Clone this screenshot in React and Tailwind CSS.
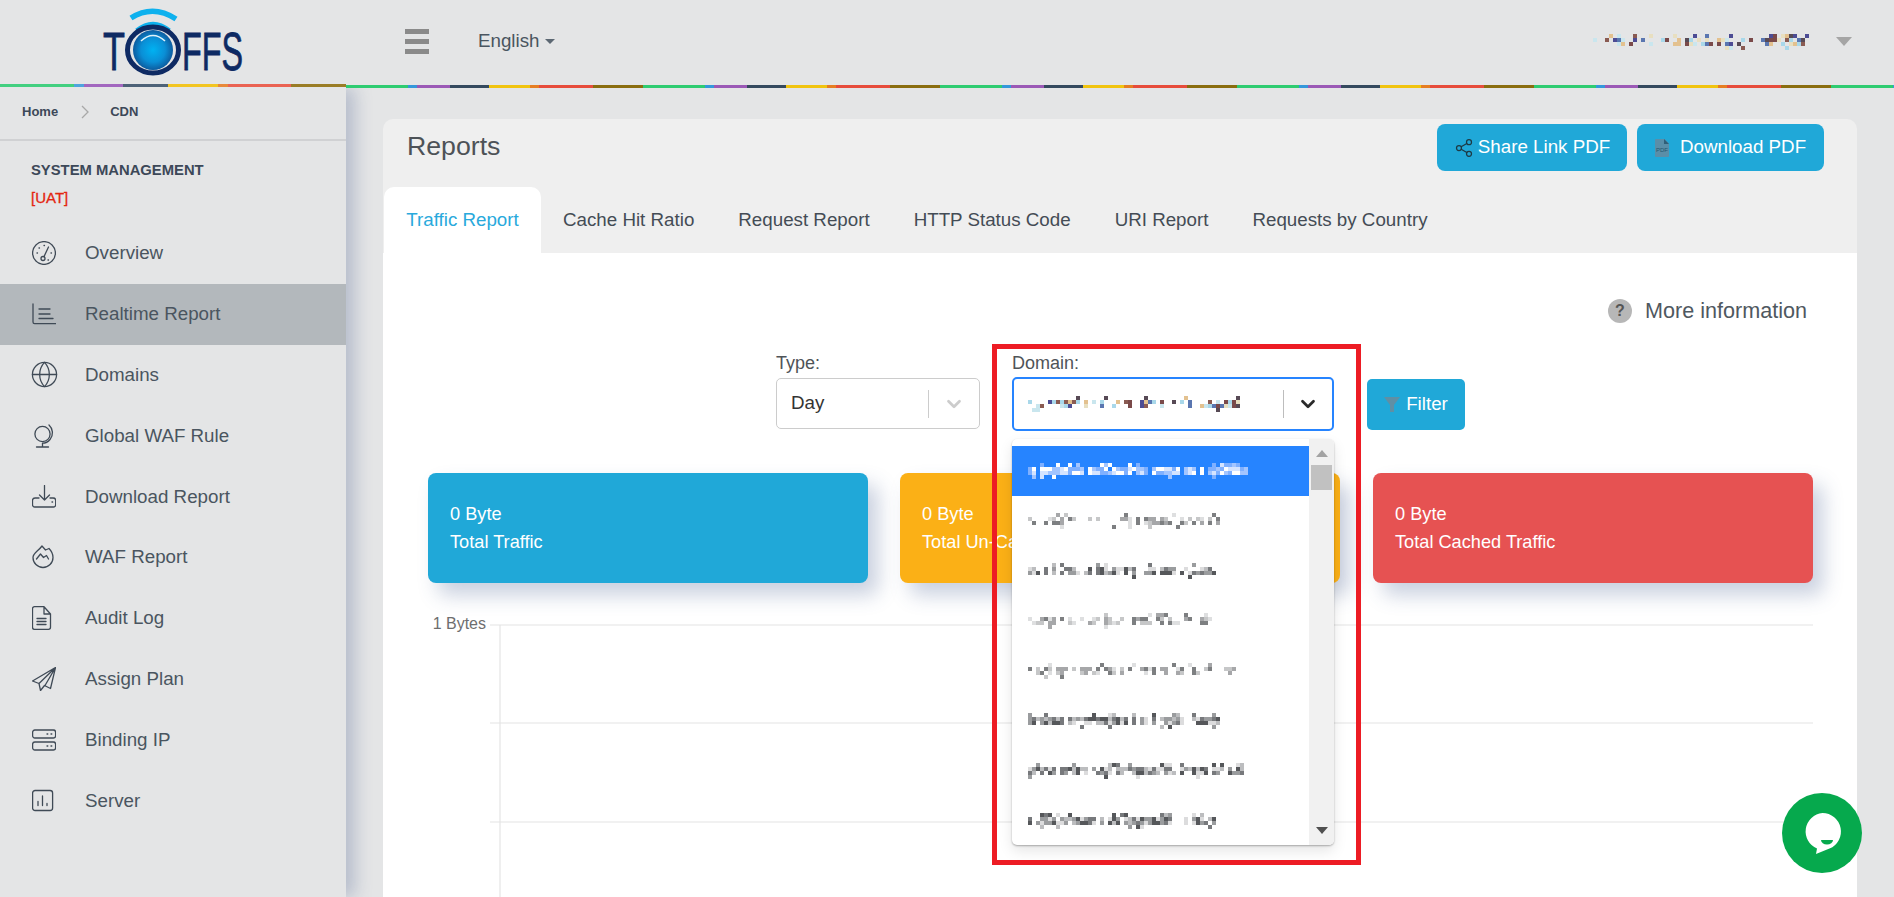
import React from 'react';
import { ChevronDown, Globe, Share2 } from 'lucide-react';

const DOMAIN_ROWS = [
  { seed: 11, width: 220, density: 0.95 },
  { seed: 23, width: 192, density: 0.55 },
  { seed: 37, width: 188, density: 0.85 },
  { seed: 41, width: 184, density: 0.5 },
  { seed: 59, width: 212, density: 0.55 },
  { seed: 67, width: 196, density: 0.9 },
  { seed: 73, width: 216, density: 0.85 },
  { seed: 89, width: 188, density: 0.9 },
];

const GRAYS = ['#55575a', '#77797c', '#9a9c9e', '#bcbdbf', '#dcdcdd'];
const LIGHT_GRAYS = ['#7d7f81', '#a6a7a9', '#c6c7c8', '#dedfe0'];
const BLUES = ['#ffffff', '#d5e4ff', '#a3c5ff', '#7fb0ff'];
const COLORED = ['#8a5b52', '#a9d8ea', '#5a76b0', '#e8dfc0', '#4c4c94', '#e3c18f', '#574a55', '#c9e6ee', '#7a4a4a'];

// the reference hides these names behind a pixel mosaic, same thing here
const Mosaic = ({ seed, width, colors, density = 0.7, cell = 4 }) => {
  const cols = Math.floor(width / cell);
  const rowChance = [density * 0.3, density, density, density * 0.1];
  const rects = [];
  let s = seed * 7919;
  const next = () => {
    s = (s * 1103515245 + 12345) % 2147483648;
    return s / 2147483648;
  };
  for (let c = 0; c < cols; c += 1) {
    const gap = next() < 0.12;
    rowChance.forEach((chance, r) => {
      const roll = next();
      const pick = next();
      if (!gap && roll < chance) {
        rects.push(
          <rect
            key={`${c}-${r}`}
            x={c * cell}
            y={r * cell}
            width={cell}
            height={cell}
            fill={colors[Math.floor(pick * colors.length)]}
          />
        );
      }
    });
  }
  return (
    <svg width={width} height={cell * 4} className="block shrink-0">
      {rects}
    </svg>
  );
};

const Logo = () => (
  <svg width="346" height="84" className="block">
    <defs>
      <radialGradient id="lens" cx="50%" cy="50%" r="55%">
        <stop offset="0%" stopColor="#00b2f2" />
        <stop offset="55%" stopColor="#0a8fd6" />
        <stop offset="100%" stopColor="#0d4f92" />
      </radialGradient>
    </defs>
    <text x="103" y="70" fontSize="53" fill="#0e2a63" stroke="#0e2a63" strokeWidth="0.8" textLength="22" lengthAdjust="spacingAndGlyphs">T</text>
    <text x="182" y="70" fontSize="53" fill="#0e2a63" stroke="#0e2a63" strokeWidth="0.8" textLength="61" lengthAdjust="spacingAndGlyphs">FFS</text>
    <path d="M131 18 Q153 4 176 19" fill="none" stroke="#0eb1ee" strokeWidth="5.5" />
    <path d="M137 31 Q153 18 169 31" fill="none" stroke="#0eb1ee" strokeWidth="5.5" />
    <ellipse cx="153" cy="50" rx="25.5" ry="23" fill="#e4e5e6" stroke="#0e2a63" strokeWidth="5" />
    <circle cx="153" cy="50" r="20" fill="url(#lens)" />
    <path d="M141 41 Q153 30 165 41" fill="none" stroke="#dff3fb" strokeWidth="1.6" />
  </svg>
);

const iconProps = {
  width: 24,
  height: 24,
  viewBox: '0 0 24 24',
  fill: 'none',
  stroke: '#3f4a56',
  strokeWidth: 1.3,
  strokeLinecap: 'round',
  strokeLinejoin: 'round',
};

const GaugeIcon = () => (
  <svg {...iconProps}>
    <circle cx="12" cy="12" r="11.4" />
    <circle cx="11" cy="17.5" r="2" />
    <path d="M12 15.6L16.5 6M5 12h.5M7 7h.5M12 4.5h.5M19 12h.5M16 19h.5" />
  </svg>
);

const AxisIcon = () => (
  <svg {...iconProps}>
    <path d="M1 2v18a1.6 1.6 0 0 0 1.6 1.6H24M7 7h11M7 12h11M7 16.5h14" />
  </svg>
);

const GlobeStandIcon = () => (
  <svg {...iconProps}>
    <circle cx="10.5" cy="10" r="7.6" />
    <path d="M17 1a10.5 10.5 0 0 1 1 14.5 10 10 0 0 1-7.5 3.7M10.5 19.2v3.6M4.5 23h12" />
  </svg>
);

const TrayDownIcon = () => (
  <svg {...iconProps}>
    <path d="M12.5 0.5V15M7.5 10l5 5 5-5M7 13H3a2.5 2.5 0 0 0-2.5 2.5v4.3A2.2 2.2 0 0 0 2.700 22h18.800a2.200 2.200 0 0 0 2.200-2.200v-4.300A2.500 2.500 0 0 0 21.200 13H18M20 17h.6" />
  </svg>
);

const FlameIcon = () => (
  <svg {...iconProps}>
    <path d="M10 1l3.500 4 3.500-1.500c2.500 2.500 4 5.500 4 9a10 10 0 1 1-20 0C1 8 6 6.500 10 1z" />
    <path d="M4.500 14L8.500 9l3 3.500 3-2 2 3.500" />
  </svg>
);

const FileIcon = () => (
  <svg {...iconProps}>
    <path d="M2.500 0.700h9.500L18.500 8v13.300a2 2 0 0 1-2 2h-14a2 2 0 0 1-2-2V2.700a2 2 0 0 1 2-2zM12 1v7h6.500M5 12.500h9M5 15.500h9M5 18.500h9" />
  </svg>
);

const PlaneIcon = () => (
  <svg {...iconProps}>
    <path d="M23.500 0.500L0.500 14l6.500 2.500 1.500 7 4-5 6 3zM23.500 0.500L7 16.500M13 18.500L23.500 0.500" />
  </svg>
);

const ServerRowsIcon = () => (
  <svg {...iconProps}>
    <rect x="0.600" y="2" width="23" height="8" rx="2.200" />
    <rect x="0.600" y="14" width="23" height="8" rx="2.200" />
    <path d="M15 6h.8M19 6h.8M15 18h.8M19 18h.8" />
  </svg>
);

const BarsBoxIcon = () => (
  <svg {...iconProps}>
    <rect x="0.600" y="1.500" width="20" height="20" rx="2.500" />
    <path d="M6 16.500v-4M10.500 16.500V7M15 16.500v-2" />
  </svg>
);

const DomainsIcon = () => <Globe size={29} strokeWidth={1.05} color="#3f4a56" className="shrink-0" />;

const MENU = [
  { label: 'Overview', Icon: GaugeIcon },
  { label: 'Realtime Report', Icon: AxisIcon, active: true },
  { label: 'Domains', Icon: DomainsIcon },
  { label: 'Global WAF Rule', Icon: GlobeStandIcon },
  { label: 'Download Report', Icon: TrayDownIcon },
  { label: 'WAF Report', Icon: FlameIcon },
  { label: 'Audit Log', Icon: FileIcon },
  { label: 'Assign Plan', Icon: PlaneIcon },
  { label: 'Binding IP', Icon: ServerRowsIcon },
  { label: 'Server', Icon: BarsBoxIcon },
];

const TABS = ['Cache Hit Ratio', 'Request Report', 'HTTP Status Code', 'URI Report', 'Requests by Country'];

const STATS = [
  { label: 'Total Traffic', bg: 'bg-[#20a8d8]' },
  { label: 'Total Un-Cached Traffic', bg: 'bg-[#fbb016]' },
  { label: 'Total Cached Traffic', bg: 'bg-[#e65252]' },
];

const App = () => {
  return (
    <div className="relative h-screen overflow-hidden bg-[#e4e5e6] font-['Liberation_Sans',Arial,sans-serif] text-[18.75px] text-[#4a5560]">
      {/* top bar */}
      <div className="relative z-20 flex h-[88px] bg-[#e4e5e6]">
        <div className="w-[346px] shrink-0">
          <Logo />
          <div className="h-[3px] bg-[linear-gradient(90deg,#42cf80_0,#42cf80_74px,#4ea4de_74px,#4ea4de_84px,#a267bf_84px,#a267bf_123px,#4d6278_123px,#4d6278_168px,#f2c522_168px,#f2c522_218px,#e8893a_218px,#e8893a_228px,#ea6353_228px,#ea6353_291px,#9a7d26_291px,#9a7d26_346px)]" />
        </div>
        <div className="flex flex-1 flex-col">
          <div className="flex h-[85px] items-center pb-[2px]">
            <div className="ml-[59px] flex w-[24px] flex-col gap-[5px]">
              <div className="h-[5px] bg-[#8a8a8a]" />
              <div className="h-[5px] bg-[#8a8a8a]" />
              <div className="h-[5px] bg-[#8a8a8a]" />
            </div>
            <span className="ml-[49px]">English</span>
            <div className="ml-[5px] h-0 w-0 border-x-[5px] border-t-[5px] border-x-transparent border-t-[#5c6873]" />
            <div className="ml-auto">
              <Mosaic seed={5} width={220} colors={COLORED} density={0.6} />
            </div>
            <div className="ml-[23px] mr-[42px] h-0 w-0 border-x-[8px] border-t-[9px] border-x-transparent border-t-[#a5a5a5]" />
          </div>
          <div className="h-[3px] bg-[repeating-linear-gradient(90deg,#2ecc71_0,#2ecc71_62px,#3498db_62px,#3498db_71px,#9b59b6_71px,#9b59b6_104px,#34495e_104px,#34495e_143px,#f1c40f_143px,#f1c40f_184px,#e67e22_184px,#e67e22_193px,#e74c3c_193px,#e74c3c_247px,#8a6d0f_247px,#8a6d0f_297px)]" />
        </div>
      </div>

      <div className="flex h-[809px]">
        {/* sidebar */}
        <aside className="relative z-10 w-[346px] shrink-0 bg-[#e4e5e6] shadow-[9px_0_16px_rgba(70,90,140,0.28)]">
          <div className="flex h-[53px] items-center border-b-2 border-[#d0d1d3] pb-[3px] pl-[22px] text-[13px] font-bold text-[#3c4858]">
            <span>Home</span>
            <svg width="8" height="14" viewBox="0 0 8 14" className="ml-[23px]" fill="none" stroke="#a8a8a8" strokeWidth="1.3">
              <path d="M1 1l6 6-6 6" />
            </svg>
            <span className="ml-[21px]">CDN</span>
          </div>
          <div className="mt-[21px] pl-[31px] text-[14.8px] font-bold leading-[16px] text-[#3c4858]">SYSTEM MANAGEMENT</div>
          <div className="mt-[12px] pl-[31px] text-[15px] leading-[16px] text-[#e3260f] [-webkit-text-stroke:0.3px_#e3260f]">[UAT]</div>
          <ul className="mt-[17px]">
            {MENU.map(({ label, Icon, active }) => (
              <li key={label} className={`flex h-[60.8px] items-center pl-[32px] ${active ? 'bg-[#b3b8bc]' : ''}`}>
                <span className="flex w-[24px] shrink-0 items-center justify-center">
                  <Icon />
                </span>
                <span className="ml-[29px]">{label}</span>
              </li>
            ))}
          </ul>
        </aside>

        {/* content */}
        <main className="ml-[37px] mt-[31px] w-[1474px] shrink-0">
          <div className="rounded-t-[10px] bg-[#efefef]">
            <div className="flex h-[68px] items-start justify-between pl-[24px] pr-[33px]">
              <h1 className="mt-[9px] text-[26.7px] leading-[36px] font-normal text-[#4d5257]">Reports</h1>
              <div className="mt-[5px] flex gap-[10px] text-white">
                <button className="flex h-[47px] w-[190px] items-center justify-center gap-[4px] rounded-[8px] bg-[#20a8d8]">
                  <Share2 size={20} color="#1d3a45" strokeWidth={1.5} />
                  <span>Share Link PDF</span>
                </button>
                <button className="flex h-[47px] w-[187px] items-center rounded-[8px] bg-[#20a8d8] pl-[18px]">
                  <svg width="14" height="18" viewBox="0 0 14 18" className="shrink-0">
                    <path d="M1 0h8.500L14 4.500V17a1 1 0 0 1-1 1H1a1 1 0 0 1-1-1V1a1 1 0 0 1 1-1z" fill="#5a8ea8" />
                    <path d="M9 0l5 5H9z" fill="#2f5f78" />
                    <text x="7" y="13" fontSize="6" fill="#23566e" textAnchor="middle">PDF</text>
                  </svg>
                  <span className="ml-[11px]">Download PDF</span>
                </button>
              </div>
            </div>
            <div className="flex h-[66px] pl-[1px]">
              <div className="flex w-[157px] justify-center rounded-t-[10px] bg-white pt-[19px] text-[#29a9dc]">Traffic Report</div>
              {TABS.map((tab) => (
                <div key={tab} className="px-[22px] pt-[19px] text-[#444c55]">{tab}</div>
              ))}
            </div>
          </div>

          <div className="h-[700px] bg-white">
            <div className="flex items-center justify-end pr-[50px] pt-[46px]">
              <span className="flex h-[24px] w-[24px] items-center justify-center rounded-full bg-[#b7b7b7] text-[16px] font-bold text-[#555]">?</span>
              <span className="ml-[13px] text-[21.6px] leading-[24px] text-[#4f5860]">More information</span>
            </div>

            <div className="ml-[393px] mt-[30px] flex items-start text-[#4f5458]">
              <div className="w-[204px]">
                <div className="h-[25px] text-[18px] leading-[21px]">Type:</div>
                <div className="flex h-[51px] items-center rounded-[5px] border border-[#cccccc] pl-[14px] text-[#333]">
                  <span className="flex-1">Day</span>
                  <div className="h-[28px] w-px bg-[#cccccc]" />
                  <span className="flex w-[50px] justify-center">
                    <ChevronDown size={22} color="#cccccc" strokeWidth={3} />
                  </span>
                </div>
              </div>

              <div className="relative ml-[32px] w-[322px]">
                <div className="h-[24px] text-[18px] leading-[21px]">Domain:</div>
                <div className="flex h-[54px] items-center rounded-[5px] border-2 border-[#2684ff] pl-[14px]">
                  <div className="flex-1">
                    <Mosaic seed={17} width={212} colors={COLORED} density={0.55} />
                  </div>
                  <div className="h-[28px] w-[1px] bg-[#bdbdbd]" />
                  <span className="flex w-[48px] justify-center">
                    <ChevronDown size={22} color="#2a2a2a" strokeWidth={3} />
                  </span>
                </div>

                <div className="absolute left-0 top-[86px] z-10 flex h-[406px] w-[322px] overflow-hidden rounded-[5px] bg-white shadow-[0_1px_2px_rgba(0,0,0,0.3),0_6px_14px_rgba(0,0,0,0.1)]">
                  <div className="w-[297px] pt-[7px]">
                    {DOMAIN_ROWS.map((row, i) => (
                      <div key={row.seed} className={`flex h-[50px] items-center pl-[16px] ${i === 0 ? 'bg-[#2684ff]' : ''}`}>
                        <Mosaic
                          seed={row.seed}
                          width={row.width}
                          density={row.density}
                          colors={i === 0 ? BLUES : row.density < 0.6 ? LIGHT_GRAYS : GRAYS}
                        />
                      </div>
                    ))}
                  </div>
                  <div className="flex w-[25px] flex-col items-center bg-[#f1f1f1] pt-[11px]">
                    <div className="h-0 w-0 border-x-[6px] border-b-[7px] border-x-transparent border-b-[#a3a3a3]" />
                    <div className="mt-[8px] h-[25px] w-[21px] bg-[#c1c1c1]" />
                    <div className="mt-auto mb-[11px] h-0 w-0 border-x-[6px] border-t-[7px] border-x-transparent border-t-[#505050]" />
                  </div>
                </div>

                <div className="pointer-events-none absolute -left-[20px] -top-[9px] z-20 h-[521px] w-[369px] border-[5px] border-[#ed1c24]" />
              </div>

              <button className="ml-[33px] mt-[26px] flex h-[51px] w-[98px] items-center justify-center gap-[6px] rounded-[5px] bg-[#20a8d8] text-white">
                <svg width="16" height="15" viewBox="0 0 16 15">
                  <path d="M0 0h16L10 8v7H6V8z" fill="#5f8fa5" />
                </svg>
                <span>Filter</span>
              </button>
            </div>

            <div className="ml-[45px] mt-[42px] flex gap-[32px] text-[18.2px] text-white">
              {STATS.map((stat, i) => (
                <div
                  key={stat.label}
                  className={`flex h-[110px] w-[440px] flex-col justify-center gap-[6px] rounded-[8px] pl-[22px] leading-[22px] shadow-[10px_12px_20px_rgba(60,85,140,0.28)] ${stat.bg} ${i === 2 ? 'ml-[1px]' : ''}`}
                >
                  <div>0 Byte</div>
                  <div>{stat.label}</div>
                </div>
              ))}
            </div>

            <svg width="1474" height="290" className="mt-[30px] block">
              <g stroke="#e4e4e4" strokeWidth="1.200">
                <line x1="107" y1="12" x2="1430" y2="12" />
                <line x1="107" y1="110" x2="1430" y2="110" />
                <line x1="107" y1="209" x2="1430" y2="209" />
                <line x1="117" y1="12" x2="117" y2="290" />
              </g>
              <text x="103" y="16" textAnchor="end" fontSize="16" fill="#6e6e6e">1 Bytes</text>
            </svg>
          </div>
        </main>
      </div>

      {/* chat bubble */}
      <div className="absolute bottom-[24px] right-[32px] z-30 h-[80px] w-[80px] rounded-full bg-[#06a94d]">
        <svg width="80" height="80" viewBox="0 0 80 80" className="block">
          <path d="M40.500 20a18.500 18.500 0 0 1 7 35.600L34 61l1-5.500A18.500 18.500 0 0 1 40.500 20z" fill="#ffffff" />
          <path d="M39 47h12a6 4.500 0 0 1-12 0z" fill="#06a94d" />
        </svg>
      </div>
    </div>
  );
};

export default App;
